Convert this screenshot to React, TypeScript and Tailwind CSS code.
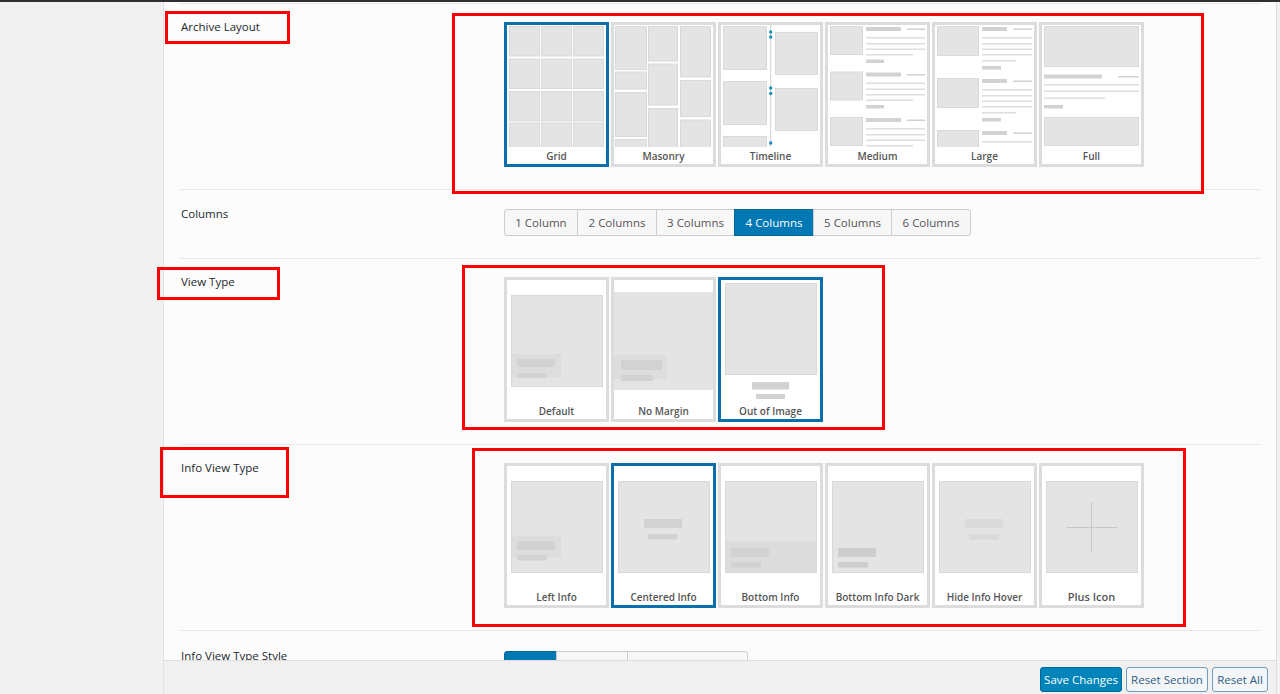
import type { ReactNode } from "react";

const IMG = "#e4e4e4";
const EDGE = "#d9d9d9";
const BAR = "#d2d2d2";
const LINE = "#dedede";

function Img({ x, y, w, h, fill = IMG }: { x: number; y: number; w: number; h: number; fill?: string }) {
  return <rect x={x + 0.5} y={y + 0.5} width={w - 1} height={h - 1} fill={fill} stroke={EDGE} strokeWidth={1} />;
}

function Bar({ x, y, w, h, fill = BAR }: { x: number; y: number; w: number; h: number; fill?: string }) {
  return <rect x={x} y={y} width={w} height={h} fill={fill} />;
}

interface ThumbProps {
  label: string;
  selected?: boolean;
  labelClass?: string;
  children: ReactNode;
}

function Thumb({ label, selected, labelClass, children }: ThumbProps) {
  return (
    <div
      className={`flex h-[145px] w-[105px] flex-col border-[3px] bg-white ${selected ? "border-[#0a6fab]" : "border-[#dcdcdc]"}`}
    >
      <svg width="99" height="122" viewBox="0 0 99 122" className="block shrink-0">
        {children}
      </svg>
      <div
        className={`flex flex-1 items-center justify-center pt-px text-[10px] font-semibold text-[#555] ${labelClass ?? ""}`}
      >
        {label}
      </div>
    </div>
  );
}

function MediumGroup({ y }: { y: number }) {
  return (
    <g>
      <Img x={2} y={y} w={33} h={29} />
      <Bar x={38} y={y + 1} w={35} h={4} />
      <Bar x={79} y={y + 2.5} w={18} h={1.5} />
      <Bar x={38} y={y + 11} w={59} h={1.5} fill={LINE} />
      <Bar x={38} y={y + 17} w={59} h={1.5} fill={LINE} />
      <Bar x={38} y={y + 22.5} w={59} h={1.5} fill={LINE} />
      <Bar x={38} y={y + 28} w={47} h={1.5} fill={LINE} />
      <Bar x={38} y={y + 33.5} w={18} h={3.5} />
    </g>
  );
}

function LargeGroup({ y }: { y: number }) {
  return (
    <g>
      <Img x={2} y={y} w={42} h={30} />
      <Bar x={47} y={y + 1} w={25} h={4} />
      <Bar x={78} y={y + 2.5} w={19} h={1.5} />
      <Bar x={47} y={y + 11} w={50} h={1.5} fill={LINE} />
      <Bar x={47} y={y + 17} w={50} h={1.5} fill={LINE} />
      <Bar x={47} y={y + 22.5} w={50} h={1.5} fill={LINE} />
      <Bar x={47} y={y + 28} w={50} h={1.5} fill={LINE} />
      <Bar x={47} y={y + 34} w={34} h={1.5} fill={LINE} />
      <Bar x={47} y={y + 40} w={19} h={3.5} />
    </g>
  );
}

function CardImg() {
  return <Img x={4} y={15} w={92} h={92} />;
}

const archive = [
  {
    label: "Grid",
    selected: true,
    art: (
      <g>
        {[2, 34, 66].map((x) =>
          [1, 33.5, 66, 97.5].map((y) => <Img key={`${x}-${y}`} x={x} y={y} w={31} h={30.5} />),
        )}
      </g>
    ),
  },
  {
    label: "Masonry",
    art: (
      <g>
        <Img x={1} y={1} w={32} h={44} />
        <Img x={1} y={46.5} w={32} h={18} />
        <Img x={1} y={67} w={32} h={45} />
        <Img x={1} y={114} w={32} h={10} />
        <Img x={34} y={1} w={30} h={35.5} />
        <Img x={34} y={38.5} w={30} h={42} />
        <Img x={34} y={83} w={30} h={40} />
        <Img x={66} y={1} w={31} h={51.5} />
        <Img x={66} y={55} w={31} h={37} />
        <Img x={66} y={94.5} w={31} h={29} />
      </g>
    ),
  },
  {
    label: "Timeline",
    art: (
      <g>
        <Img x={2} y={1} w={44} h={44} />
        <Img x={2} y={56} w={44} h={44} />
        <Img x={2} y={111} w={44} h={12} />
        <rect x={49.2} y={0} width={1} height={122} fill="#cfcfcf" />
        {[7, 12, 63, 68.5, 118].map((y) => (
          <circle key={y} cx={49.7} cy={y} r={1.7} fill="#1e8cbe" />
        ))}
        <Img x={54} y={7} w={43} h={43} />
        <Img x={54} y={63} w={43} h={43} />
      </g>
    ),
  },
  {
    label: "Medium",
    art: (
      <g>
        <MediumGroup y={1} />
        <MediumGroup y={46.5} />
        <MediumGroup y={92} />
      </g>
    ),
  },
  {
    label: "Large",
    art: (
      <g>
        <LargeGroup y={1} />
        <LargeGroup y={53} />
        <LargeGroup y={105} />
      </g>
    ),
  },
  {
    label: "Full",
    art: (
      <g>
        <Img x={2} y={1} w={95} h={41} />
        <Bar x={2} y={49.5} w={58} h={4} />
        <Bar x={76} y={51} w={21} h={1.5} />
        <Bar x={2} y={59} w={95} h={1.5} fill={LINE} />
        <Bar x={2} y={65.5} w={95} h={1.5} fill={LINE} />
        <Bar x={2} y={72.5} w={61} h={1.5} fill={LINE} />
        <Bar x={2} y={80} w={19} h={3.5} />
        <Img x={2} y={92} w={95} h={29} />
      </g>
    ),
  },
];

const viewTypes = [
  {
    label: "Default",
    art: (
      <g>
        <CardImg />
        <rect x={5} y={74} width={49} height={23} fill="#dddddd" />
        <Bar x={10} y={79} w={38} h={8} />
        <Bar x={10} y={93} w={30} h={5} />
      </g>
    ),
  },
  {
    label: "No Margin",
    art: (
      <g>
        <rect x={0} y={12} width={99} height={98} fill={IMG} />
        <rect x={0} y={75} width={52} height={24} fill="#dddddd" />
        <Bar x={7} y={80} w={41} h={10} />
        <Bar x={7} y={95} w={32} h={6} />
      </g>
    ),
  },
  {
    label: "Out of Image",
    selected: true,
    art: (
      <g>
        <Img x={4} y={3} w={92} h={92} />
        <Bar x={31} y={102} w={37} h={7.5} />
        <Bar x={35} y={114} w={29} h={5} />
      </g>
    ),
  },
];

const infoTypes = [
  {
    label: "Left Info",
    art: (
      <g>
        <CardImg />
        <rect x={5} y={70} width={49} height={22} fill="#dddddd" />
        <Bar x={10} y={75} w={38} h={9} />
        <Bar x={10} y={89} w={30} h={5.5} />
      </g>
    ),
  },
  {
    label: "Centered Info",
    selected: true,
    art: (
      <g>
        <CardImg />
        <Bar x={30} y={53} w={38} h={9} />
        <Bar x={34} y={68} w={29} h={5.5} />
      </g>
    ),
  },
  {
    label: "Bottom Info",
    art: (
      <g>
        <CardImg />
        <rect x={4.5} y={75} width={91} height={31.5} fill="#dcdcdc" />
        <Bar x={10} y={82} w={38} h={9} />
        <Bar x={10} y={96} w={30} h={5.5} />
      </g>
    ),
  },
  {
    label: "Bottom Info Dark",
    art: (
      <g>
        <CardImg />
        <Bar x={10} y={82} w={38} h={9} fill="#cdcdcd" />
        <Bar x={10} y={96} w={30} h={5.5} fill="#cdcdcd" />
      </g>
    ),
  },
  {
    label: "Hide Info Hover",
    art: (
      <g>
        <CardImg />
        <Bar x={30} y={53} w={38} h={9} fill="#dadada" />
        <Bar x={34} y={68} w={30} h={5.5} fill="#dadada" />
      </g>
    ),
  },
  {
    label: "Plus Icon",
    labelClass: "pb-[4px] text-[11px]",
    art: (
      <g>
        <CardImg />
        <rect x={25} y={61} width={50} height={1} fill="#c8c8c8" />
        <rect x={49} y={36} width={1} height={50} fill="#c8c8c8" />
      </g>
    ),
  },
];

const columns = [
  { label: "1 Column", w: "w-[74px]" },
  { label: "2 Columns", w: "w-[80px]" },
  { label: "3 Columns", w: "w-[79px]" },
  { label: "4 Columns", w: "w-[80px]" },
  { label: "5 Columns", w: "w-[79px]" },
  { label: "6 Columns", w: "w-[80px]" },
];

function Row({ label, children, className }: { label: string; children: ReactNode; className?: string }) {
  return (
    <div className={`flex border-t border-[#e8e8e8] ${className ?? ""}`}>
      <div className="-mt-[3px] w-[324px] shrink-0 pl-px text-[11.5px] leading-[16px] text-[#23282d]">{label}</div>
      <div className="flex-1">{children}</div>
    </div>
  );
}

export default function App() {
  return (
    <div
      className="relative flex h-[694px] w-[1280px] flex-col overflow-hidden bg-[#f1f1f1]"
      style={{ fontFamily: '"Open Sans", "Noto Sans", Arial, sans-serif' }}
    >
      <div className="h-[2px] shrink-0 bg-[#2b3035]" />
      <div className="flex min-h-0 flex-1">
        {/* admin sidebar */}
        <div className="w-[164px] shrink-0 border-r border-[#e2e2e2] bg-[#f1f1f1]" />

        <div className="flex min-w-0 flex-1 flex-col bg-[#fcfcfc]">
          <div className="min-h-0 flex-1 overflow-hidden px-[16px] pt-px">
            <Row label="Archive Layout" className="pt-[18px] pb-[22px]">
              <div className="flex gap-[2px]">
                {archive.map((t) => (
                  <Thumb key={t.label} label={t.label} selected={t.selected}>
                    {t.art}
                  </Thumb>
                ))}
              </div>
            </Row>

            <Row label="Columns" className="pt-[19px] pb-[22px]">
              <div className="flex">
                {columns.map((c, i) => (
                  <div
                    key={c.label}
                    className={`flex h-[27px] items-center justify-center border text-[11.5px] ${c.w} ${
                      i === 3
                        ? "border-[#006799] bg-[#0078b4] text-white"
                        : "border-[#cccccc] bg-[#f7f7f7] text-[#555]"
                    } ${i === 0 ? "rounded-l-[3px]" : "-ml-px"} ${i === 5 ? "rounded-r-[3px]" : ""}`}
                  >
                    {c.label}
                  </div>
                ))}
              </div>
            </Row>

            <Row label="View Type" className="pt-[18px] pb-[22px]">
              <div className="flex gap-[2px]">
                {viewTypes.map((t) => (
                  <Thumb key={t.label} label={t.label} selected={t.selected}>
                    {t.art}
                  </Thumb>
                ))}
              </div>
            </Row>

            <Row label="Info View Type" className="pt-[18px] pb-[22px]">
              <div className="flex gap-[2px]">
                {infoTypes.map((t) => (
                  <Thumb key={t.label} label={t.label} selected={t.selected} labelClass={t.labelClass}>
                    {t.art}
                  </Thumb>
                ))}
              </div>
            </Row>

            <Row label="Info View Type Style" className="pt-[20px]">
              <div className="flex">
                <div className="h-[27px] w-[53px] rounded-l-[3px] border border-[#006799] bg-[#0078b4]" />
                <div className="-ml-px h-[27px] w-[72px] border border-[#cccccc] bg-[#f7f7f7]" />
                <div className="-ml-px h-[27px] w-[121px] rounded-r-[3px] border border-[#cccccc] bg-[#f7f7f7]" />
              </div>
            </Row>
          </div>

          {/* sticky footer */}
          <div className="flex h-[34px] shrink-0 items-start justify-end gap-[4px] border-t border-[#dddddd] bg-[#f0f0f0] pt-[6px] pr-[8px]">
            <button className="h-[25px] w-[82px] rounded-[3px] border border-[#006799] bg-[#0085ba] text-[11.5px] text-white">
              Save Changes
            </button>
            <button className="h-[25px] w-[82px] rounded-[3px] border border-[#6f9dbd] bg-[#f3f5f6] text-[11.5px] text-[#2d5f86]">
              Reset Section
            </button>
            <button className="h-[25px] w-[56px] rounded-[3px] border border-[#6f9dbd] bg-[#f3f5f6] text-[11.5px] text-[#2d5f86]">
              Reset All
            </button>
          </div>
        </div>

        <div className="w-[4px] shrink-0 border-l border-[#dddddd] bg-[#f1f1f1]" />
      </div>

      {/* red annotation boxes */}
      <div className="pointer-events-none absolute left-[165px] top-[11px] h-[33px] w-[125px] border-[3px] border-[#ff0000]" />
      <div className="pointer-events-none absolute left-[452px] top-[13px] h-[181px] w-[752px] border-[3px] border-[#ff0000]" />
      <div className="pointer-events-none absolute left-[157px] top-[267px] h-[33px] w-[123px] border-[3px] border-[#ff0000]" />
      <div className="pointer-events-none absolute left-[462px] top-[265px] h-[165px] w-[423px] border-[3px] border-[#ff0000]" />
      <div className="pointer-events-none absolute left-[160px] top-[447px] h-[51px] w-[129px] border-[3px] border-[#ff0000]" />
      <div className="pointer-events-none absolute left-[472px] top-[448px] h-[179px] w-[714px] border-[3px] border-[#ff0000]" />
    </div>
  );
}
